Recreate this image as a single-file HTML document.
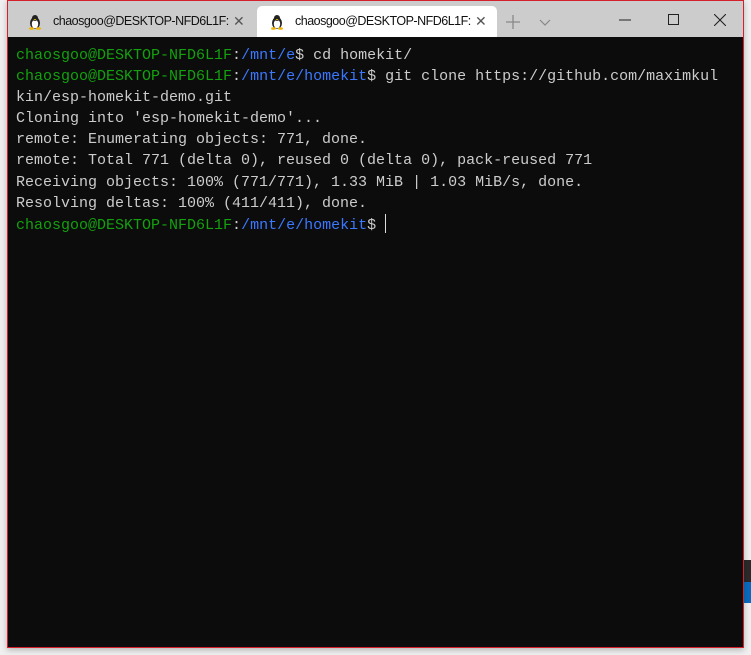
<!DOCTYPE html>
<html><head><style>
body{margin:0;width:751px;height:655px;background:#f0f0f0;position:relative;overflow:hidden;font-family:"Liberation Sans",sans-serif}
.side{position:absolute;left:744px;width:7px}
.win{position:absolute;left:7px;top:0;width:735px;height:646px;border:1px solid #d4202c;background:#0c0c0c;box-shadow:0 2px 6px rgba(0,0,0,.25)}
.bar{position:absolute;left:0;top:0;width:735px;height:36px;background:#cccccc}
.tab{position:absolute;top:5px;height:31px;width:240px;font-size:12.5px;color:#111;line-height:31px}
.tab .t{position:absolute;left:38px;letter-spacing:-0.5px}
.tab .x{position:absolute;left:218px;font-size:14px;color:#555}
.act{background:#fff;border-radius:5px 5px 0 0}
.term{position:absolute;left:8px;top:44px;font-family:"Liberation Mono",monospace;font-size:15px;line-height:21.1px;color:#cccccc;white-space:pre}
.g2{color:#13a10e}.b{color:#3b78ff}
.cur{display:inline-block;width:1px;height:19px;background:#ddd;vertical-align:-4px;margin-left:9px}
</style></head><body>
<div class="side" style="top:560px;height:22px;background:#2b2b2b"></div>
<div class="side" style="top:582px;height:21px;background:#0a6cbf"></div>
<div class="win">
<div class="bar">
<div class="tab" style="left:7px">
<svg style="position:absolute;left:13px;top:8px" width="14" height="16" viewBox="0 0 14 16"><ellipse cx="7" cy="9" rx="5" ry="6" fill="#222"/><ellipse cx="7" cy="10" rx="3.2" ry="4.5" fill="#fff"/><circle cx="7" cy="4" r="3" fill="#222"/><path d="M5.5 5h3l-1.5 1.5z" fill="#f0b400"/><ellipse cx="3.5" cy="14.5" rx="2.5" ry="1.3" fill="#f0b400"/><ellipse cx="10.5" cy="14.5" rx="2.5" ry="1.3" fill="#f0b400"/></svg>
<span class="t">chaosgoo@DESKTOP-NFD6L1F:</span><span class="x">✕</span></div>
<div class="tab act" style="left:249px">
<svg style="position:absolute;left:13px;top:8px" width="14" height="16" viewBox="0 0 14 16"><ellipse cx="7" cy="9" rx="5" ry="6" fill="#222"/><ellipse cx="7" cy="10" rx="3.2" ry="4.5" fill="#fff"/><circle cx="7" cy="4" r="3" fill="#222"/><path d="M5.5 5h3l-1.5 1.5z" fill="#f0b400"/><ellipse cx="3.5" cy="14.5" rx="2.5" ry="1.3" fill="#f0b400"/><ellipse cx="10.5" cy="14.5" rx="2.5" ry="1.3" fill="#f0b400"/></svg>
<span class="t">chaosgoo@DESKTOP-NFD6L1F:</span><span class="x">✕</span></div>
<svg style="position:absolute;left:498px;top:14px" width="14" height="14"><path d="M7 0v14M0 7h14" stroke="#888" stroke-width="1.3"/></svg>
<svg style="position:absolute;left:531px;top:18px" width="12" height="8"><path d="M1 1l5 5 5-5" stroke="#888" stroke-width="1.2" fill="none"/></svg>
<svg style="position:absolute;left:611px;top:18px" width="12" height="2"><path d="M0 1h12" stroke="#222"/></svg>
<svg style="position:absolute;left:660px;top:13px" width="11" height="11"><rect x=".5" y=".5" width="10" height="10" fill="none" stroke="#222"/></svg>
<svg style="position:absolute;left:706px;top:13px" width="12" height="12"><path d="M0 0l12 12M12 0L0 12" stroke="#222" stroke-width="1.1"/></svg>
</div>
<div class="term"><span class="g2">chaosgoo@DESKTOP-NFD6L1F</span>:<span class="b">/mnt/e</span>$ cd homekit/
<span class="g2">chaosgoo@DESKTOP-NFD6L1F</span>:<span class="b">/mnt/e/homekit</span>$ git clone https://github.com/maximkul
kin/esp-homekit-demo.git
Cloning into 'esp-homekit-demo'...
remote: Enumerating objects: 771, done.
remote: Total 771 (delta 0), reused 0 (delta 0), pack-reused 771
Receiving objects: 100% (771/771), 1.33 MiB | 1.03 MiB/s, done.
Resolving deltas: 100% (411/411), done.
<span class="g2">chaosgoo@DESKTOP-NFD6L1F</span>:<span class="b">/mnt/e/homekit</span>$<span class="cur"></span></div>
</div>
</body></html>
